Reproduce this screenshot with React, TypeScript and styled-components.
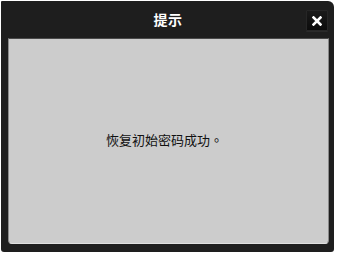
import styled, { createGlobalStyle } from "styled-components";

const Global = createGlobalStyle`
  html, body {
    margin: 0;
    padding: 0;
    background: #ffffff;
  }
  body {
    font-family: "Noto Sans CJK SC", "Liberation Sans", sans-serif;
  }
`;

const Dialog = styled.div`
  margin: 1px 0 0 1px;
  width: 333px;
  height: 251px;
  box-sizing: border-box;
  background: #1e1e1e;
  border-radius: 1px 6px 3px 3px;
  display: flex;
  flex-direction: column;
  padding: 0 5px 8px 7px;
`;

const Header = styled.div`
  height: 37px;
  display: grid;
  grid-template-columns: 1fr auto 1fr;
  align-items: center;
  margin: 0 -5px 0 -7px;
  padding: 0 6px 0 7px;
`;

const Title = styled.div`
  grid-column: 2;
  color: #ffffff;
  font-size: 14px;
  font-weight: bold;
  letter-spacing: 0.5px;
  line-height: 1;
  margin-top: -1px;
`;

const CloseButton = styled.button`
  grid-column: 3;
  justify-self: end;
  align-self: start;
  width: 22px;
  height: 21px;
  margin-top: 9px;
  padding: 0;
  border: 1px solid #262626;
  border-radius: 1px;
  background: linear-gradient(#1a1a1a, #0c0c0c);
  box-shadow: 0 1px 0 #2a2a2a;
  display: flex;
  align-items: center;
  justify-content: center;
  cursor: pointer;
`;

const Panel = styled.div`
  flex: 1;
  background: #cccccc;
  border-top: 1px solid #4a4a4a;
  border-left: 1px solid #8a8a8a;
  border-right: 1px solid #8a8a8a;
  border-bottom: 1px solid #e0e0e0;
  border-radius: 0 0 4px 4px;
  display: flex;
  align-items: center;
  justify-content: center;
`;

const Message = styled.div`
  color: #111111;
  font-family: "Noto Sans CJK TC", "Noto Sans CJK SC", sans-serif;
  font-size: 13px;
  line-height: 1;
  margin-top: -4px;
  margin-left: -8px;
`;

export default function App() {
  return (
    <>
      <Global />
      <Dialog>
        <Header>
          <Title>提示</Title>
          <CloseButton aria-label="关闭">
            <svg width="10" height="10" viewBox="0 0 10 10">
              <path
                d="M1.5 1.5 L8.5 8.5 M8.5 1.5 L1.5 8.5"
                stroke="#ffffff"
                strokeWidth="2.6"
                strokeLinecap="square"
              />
            </svg>
          </CloseButton>
        </Header>
        <Panel>
          <Message>恢复初始密码成功。</Message>
        </Panel>
      </Dialog>
    </>
  );
}
